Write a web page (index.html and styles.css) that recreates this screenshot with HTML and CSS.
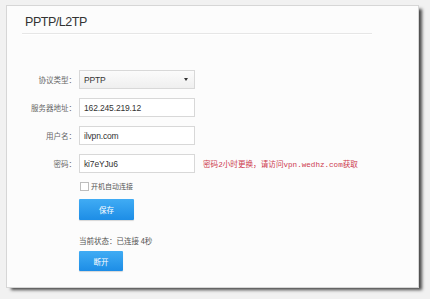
FILE: index.html
```html
<!DOCTYPE html>
<html lang="zh-CN">
<head>
<meta charset="utf-8">
<title>PPTP/L2TP</title>
<link rel="stylesheet" href="styles.css">
</head>
<body>
<div class="card">
  <div class="header"><h1 class="title">PPTP/L2TP</h1></div>
  <div class="form">
    <label class="label">协议类型：</label>
    <div class="field">
      <div class="select"><span class="value">PPTP</span><span class="arrow"></span></div>
    </div>

    <label class="label">服务器地址：</label>
    <div class="field"><div class="input"><span class="value">162.245.219.12</span></div></div>

    <label class="label">用户名：</label>
    <div class="field"><div class="input"><span class="value">ilvpn.com</span></div></div>

    <label class="label">密码：</label>
    <div class="field">
      <div class="input"><span class="value">ki7eYJu6</span></div>
      <span class="hint">密码2小时更换，请访问vpn.wedhz.com获取</span>
    </div>

    <div class="field check-row">
      <span class="checkbox"></span><span class="check-label">开机自动连接</span>
    </div>

    <div class="field"><button class="btn btn-save">保存</button></div>

    <div class="field status">当前状态：已连接 4秒</div>

    <div class="field"><button class="btn btn-off">断开</button></div>
  </div>
</div>
</body>
</html>
```
FILE: styles.css
```css
html, body {
  margin: 0;
  padding: 0;
}
body {
  background: #f1f1f1;
  width: 430px;
  height: 299px;
  overflow: hidden;
  font-family: "Liberation Sans", "Noto Sans CJK SC", sans-serif;
}
.card {
  margin: 5px 0 0 6px;
  width: 411px;
  height: 281px;
  background: #fcfcfc;
  border: 1px solid #d6d6d6;
  box-shadow: 4px 3px 3px -1px #4a4a4a;
}
.header {
  margin: 0 46px 0 15px;
  padding: 9px 0 3px 3px;
  border-bottom: 1px solid #e6e6e6;
  box-shadow: 0 1px 0 #ffffff;
}
.title {
  margin: 0;
  font-family: "Liberation Sans", sans-serif;
  font-size: 12.5px;
  line-height: 15px;
  font-weight: normal;
  color: #333;
  letter-spacing: -0.45px;
}
.form {
  display: grid;
  grid-template-columns: 69px auto;
  column-gap: 3px;
  align-items: center;
  margin-top: 36px;
}
.label {
  grid-column: 1;
  text-align: right;
  font-family: "Noto Sans CJK SC", sans-serif;
  font-size: 7.5px;
  color: #666;
  line-height: 19px;
  margin-bottom: 9px;
}
.field {
  grid-column: 2;
  display: flex;
  align-items: center;
}
.label + .field {
  margin-bottom: 9px;
}
.select, .input {
  box-sizing: border-box;
  width: 116px;
  height: 19px;
  border: 1px solid #d8d8d8;
  display: flex;
  align-items: center;
  padding: 0 6px 0 4px;
}
.select {
  background: linear-gradient(#fbfbfb, #efefef);
  justify-content: space-between;
}
.input {
  background: #ffffff;
}
.value {
  font-family: "Liberation Sans", sans-serif;
  font-size: 8.5px;
  letter-spacing: -0.15px;
  color: #333;
}
.arrow {
  width: 0;
  height: 0;
  border-left: 2.5px solid transparent;
  border-right: 2.5px solid transparent;
  border-top: 3px solid #333;
}
.hint {
  margin-left: 8px;
  font-family: "Liberation Mono", "Noto Sans CJK SC", monospace;
  font-size: 7.6px;
  color: #cc3a4e;
  white-space: nowrap;
}
.check-row {
  height: 10px;
  margin-top: -1px;
}
.checkbox {
  box-sizing: border-box;
  width: 9px;
  height: 9px;
  border: 1px solid #bdbdbd;
  background: #fff;
  margin-left: 1px;
}
.check-label {
  margin-left: 2px;
  font-family: "Noto Sans CJK SC", sans-serif;
  font-size: 7px;
  color: #555;
}
.btn {
  border: none;
  border-radius: 1px;
  background: linear-gradient(#40acf4, #1d8de6);
  color: #fff;
  font-family: "Noto Sans CJK SC", sans-serif;
  font-size: 7.5px;
  padding: 0;
  box-shadow: 0 1px 1px rgba(0,0,0,0.15);
}
.btn-save {
  width: 55px;
  height: 21px;
  margin-top: 8px;
}
.btn-off {
  width: 44px;
  height: 20px;
  margin-top: 4px;
}
.status {
  margin-top: 15px;
  line-height: 12px;
  font-family: "Noto Sans CJK SC", sans-serif;
  font-size: 7.5px;
  color: #555;
}
```
